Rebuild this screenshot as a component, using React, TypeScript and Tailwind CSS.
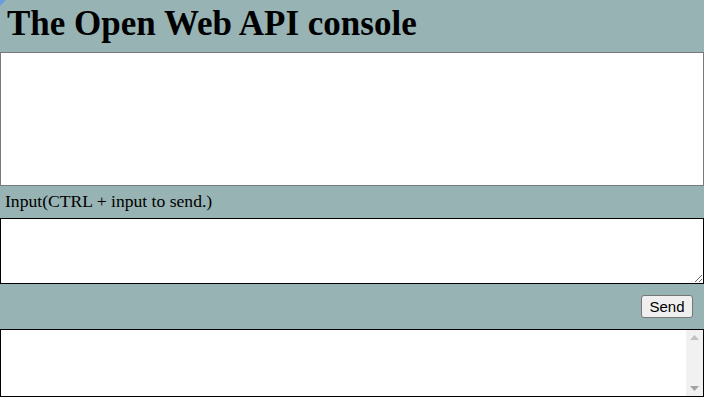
import React from 'react';

const App = () => {
  return (
    <div className="relative w-[704px] bg-[#97b3b3] font-['Liberation_Serif',serif] text-black">
      <div className="absolute left-0 top-0 h-0 w-0 border-t-[6px] border-r-[6px] border-t-[#6b9be0] border-r-transparent" />
      <h1 className="m-0 px-[7px] pt-[4px] pb-[8px] text-[35px] font-bold leading-[40px]">
        The Open Web API console
      </h1>
      <div className="h-[134px] border border-[#7a7a7a] bg-white" />
      <div className="px-[5px] pt-[5px] pb-[7px] text-[17.6px] leading-[20px]">
        Input(CTRL + input to send.)
      </div>
      <textarea
        title="input"
        className="block h-[66px] w-full resize-y border border-black bg-white outline-none"
      />
      <div className="flex justify-end pt-[11px] pb-[11px] pr-[11px]">
        <button className="h-[23px] w-[52px] rounded-[3px] border border-[#767676] bg-[#efefef] font-['Liberation_Sans',sans-serif] text-[15px] leading-none">
          Send
        </button>
      </div>
      <div className="flex h-[68px] border border-black bg-white">
        <div className="flex-1" />
        <div className="flex w-[17px] flex-col items-center justify-between bg-[#f1f1f1] py-[5px]">
          <svg width="9" height="5" viewBox="0 0 9 5">
            <path d="M0 5 L4.5 0 L9 5 Z" fill="#c1c1c1" />
          </svg>
          <svg width="9" height="5" viewBox="0 0 9 5">
            <path d="M0 0 L9 0 L4.5 5 Z" fill="#a3a3a3" />
          </svg>
        </div>
      </div>
    </div>
  );
};

export default App;
